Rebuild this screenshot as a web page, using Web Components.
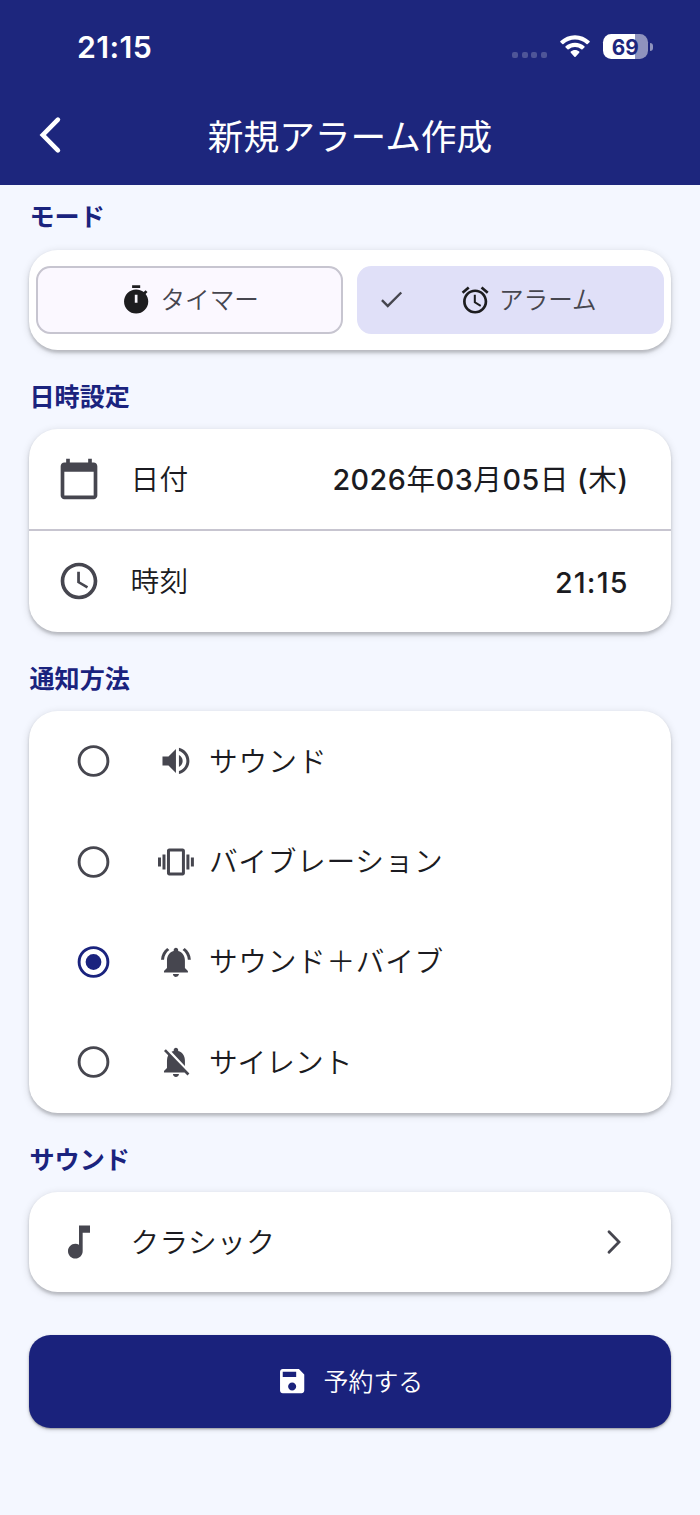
<!DOCTYPE html>
<html lang="ja">
<head>
<meta charset="utf-8">
<title>新規アラーム作成</title>
<style>
  body { margin: 0; background: #f4f7ff; font-family: Inter, "Noto Sans CJK JP", sans-serif; color: #1b1b21; }
</style>
</head>
<body>
<alarm-page></alarm-page>
<script>
const ICONS = {
  timer: 'M15 1H9v2h6V1zm-4 13h2V8h-2v6zm8.03-6.61l1.42-1.42c-.43-.51-.9-.99-1.41-1.41l-1.42 1.42C16.07 4.74 14.12 4 12 4c-4.97 0-9 4.03-9 9s4.02 9 9 9 9-4.03 9-9c0-2.12-.74-4.07-1.97-5.61z',
  alarm: 'M22 5.72l-4.6-3.86-1.29 1.53 4.6 3.86L22 5.72zM7.88 3.39L6.6 1.86 2 5.71l1.29 1.53 4.59-3.85zM12.5 8H11v6l4.75 2.85.75-1.23-4-2.37V8zM12 4c-4.97 0-9 4.03-9 9s4.02 9 9 9c4.97 0 9-4.03 9-9s-4.03-9-9-9zm0 16c-3.87 0-7-3.13-7-7s3.13-7 7-7 7 3.13 7 7-3.13 7-7 7z',
  check: 'M9 16.17L4.83 12l-1.42 1.41L9 19 21 7l-1.41-1.41z',
  calendar: 'M20 3h-1V1h-2v2H7V1H5v2H4c-1.1 0-2 .9-2 2v16c0 1.1.9 2 2 2h16c1.1 0 2-.9 2-2V5c0-1.1-.9-2-2-2zm0 18H4V8h16v13z',
  clock: 'M11.99 2C6.47 2 2 6.48 2 12s4.47 10 9.99 10C17.52 22 22 17.52 22 12S17.52 2 11.99 2zM12 20c-4.42 0-8-3.58-8-8s3.58-8 8-8 8 3.58 8 8-3.58 8-8 8zm.5-13H11v6l5.25 3.15.75-1.23-4.5-2.67z',
  volume: 'M3 9v6h4l5 5V4L7 9H3zm13.5 3c0-1.77-1.02-3.29-2.5-4.03v8.05c1.48-.73 2.5-2.25 2.5-4.02zM14 3.23v2.06c2.89.86 5 3.54 5 6.71s-2.11 5.85-5 6.71v2.06c4.01-.91 7-4.49 7-8.77s-2.99-7.86-7-8.77z',
  vibration: 'M0 15h2V9H0v6zm3 2h2V7H3v10zm19-8v6h2V9h-2zm-3 8h2V7h-2v10zM16.5 3h-9C6.67 3 6 3.67 6 4.5v15c0 .83.67 1.5 1.5 1.5h9c.83 0 1.5-.67 1.5-1.5v-15c0-.83-.67-1.5-1.5-1.5zM16 19H8V5h8v14z',
  bell: 'M7.58 4.08L6.15 2.65C3.75 4.48 2.17 7.3 2.03 10.5h2c.15-2.65 1.51-4.97 3.55-6.42zm12.39 6.42h2c-.15-3.2-1.73-6.02-4.12-7.85l-1.42 1.43c2.02 1.45 3.39 3.77 3.54 6.42zM18 11c0-3.07-1.64-5.64-4.5-6.32V4c0-.83-.67-1.5-1.5-1.5s-1.5.67-1.5 1.5v.68C7.63 5.36 6 7.92 6 11v5l-2 2v1h16v-1l-2-2v-5zm-6 11c.14 0 .27-.01.4-.04.65-.14 1.18-.58 1.44-1.18.1-.24.15-.5.15-.78h-4c.01 1.1.9 2 2.01 2z',
  belloff: 'M20 18.69L7.84 6.14 5.27 3.49 4 4.76l2.8 2.8v.01c-.52.99-.8 2.16-.8 3.42v5l-2 2v1h13.73l2 2L21 19.72l-1-1.03zM12 22c1.11 0 2-.89 2-2h-4c0 1.11.89 2 2 2zm6-7.32V11c0-3.08-1.64-5.64-4.5-6.32V4c0-.83-.67-1.5-1.5-1.5s-1.5.67-1.5 1.5v.68c-.15.03-.29.08-.42.12-.1.03-.2.07-.3.11h-.01c-.01 0-.01 0-.02.01-.23.09-.46.2-.68.31 0 0-.01 0-.01.01L18 14.68z',
  note: 'M12 3v10.55c-.59-.34-1.27-.55-2-.55-2.21 0-4 1.79-4 4s1.79 4 4 4 4-1.79 4-4V7h4V3h-6z',
  save: 'M17 3H5c-1.11 0-2 .9-2 2v14c0 1.1.89 2 2 2h14c1.1 0 2-.9 2-2V7l-4-4zm-5 16c-1.66 0-3-1.34-3-3s1.34-3 3-3 3 1.34 3 3-1.34 3-3 3zm3-10H5V5h10v4z'
};

function define(name, render) {
  customElements.define(name, class extends HTMLElement {
    constructor() { super(); this.attachShadow({ mode: 'open' }); }
    connectedCallback() { this.shadowRoot.innerHTML = render(this); }
  });
}

define('md-icon', el => {
  const s = el.getAttribute('size');
  return `<style>:host{display:block;flex:none;width:${s}px;height:${s}px}svg{display:block}</style>
  <svg width="${s}" height="${s}" viewBox="0 0 24 24" fill="currentColor" fill-rule="evenodd"><path d="${ICONS[el.getAttribute('name')]}"/></svg>`;
});

define('status-bar', () => `<style>
  :host{display:flex;align-items:center;height:93px;padding:0 47.5px 0 77px;box-sizing:border-box;color:#fff}
  .time{font-size:30.300px;font-weight:600;letter-spacing:.4px;line-height:36px;margin-right:auto;padding-top:1px}
  .dots{display:flex;gap:3.7px;margin:16px 13px 0 0}
  .dots i{width:6px;height:6px;border-radius:2px;background:#4e5598}
  .wifi{display:block;margin-right:13px}
  .battery{display:flex;align-items:center;justify-content:center;width:45.3px;height:25px;border-radius:8.2px;box-sizing:border-box;padding:1px 1px 0 0;
    background:linear-gradient(90deg,#fff 32px,#8f93be 32px);color:#1d267d;font-size:20.800px;font-weight:650;line-height:25px}
  .tip{width:2.6px;height:8px;margin-left:1.6px;border-radius:0 4px 4px 0;background:#8f93be}
  </style>
  <span class="time">21:15</span>
  <span class="dots"><i></i><i></i><i></i><i></i></span>
  <svg class="wifi" width="30" height="23" viewBox="0 0 30 23" fill="#fff">
    <path d="M15 .3C20.6.3 25.700 2.500 29.500 6.100Q30.100 6.700 29.500 7.300L27.700 9.100Q27.100 9.600 26.500 9.100A16.700 16.700 0 0 0 3.500 9.100Q2.900 9.600 2.300 9.100L.5 7.300Q-.1 6.700.5 6.100C4.300 2.500 9.400.3 15 .3z"/>
    <path d="M15 7.700C18.600 7.700 21.900 9.100 24.400 11.300Q25 11.900 24.400 12.500L22.500 14.300Q21.900 14.800 21.300 14.300A9.400 9.400 0 0 0 8.700 14.300Q8.100 14.800 7.500 14.300L5.600 12.500Q5 11.900 5.600 11.300C8.100 9.100 11.400 7.700 15 7.700z"/>
    <path d="M15 15.100C16.600 15.100 18.100 15.700 19.200 16.600Q19.800 17.200 19.200 17.800L15.600 21.800Q15 22.400 14.400 21.800L10.800 17.800Q10.200 17.200 10.800 16.600C11.900 15.700 13.400 15.100 15 15.100z"/>
  </svg>
  <span class="battery">69</span><span class="tip"></span>`);

define('app-bar', () => `<style>
  :host{display:grid;grid-template-columns:100px 1fr 100px;align-items:center;height:91.7px;color:#fff}
  svg{display:block;margin-left:38px;margin-bottom:7px}
  h1{margin:0 0 3.500px;font-size:35.7px;font-weight:400;line-height:50px;text-align:center;white-space:nowrap}
  </style>
  <svg width="26" height="40" viewBox="0 0 26 40" fill="none" stroke="#fff" stroke-width="4.600" stroke-linecap="round"><path d="M19.900 4.700L4.800 20L19.900 35.300"/></svg>
  <h1><slot></slot></h1>`);

define('section-label', () => `<style>
  :host{display:block;font-size:25.100px;font-weight:700;line-height:36px;color:#1a237e;padding-left:.5px}
  </style><slot></slot>`);

define('surface-card', () => `<style>
  :host{display:flex;flex-direction:column;background:#fff;border-radius:28.700px;box-sizing:border-box;
    box-shadow:0 2.500px 3px rgba(0,0,0,.17),0 2px 8px rgba(0,0,0,.14)}
  </style><slot></slot>`);

define('segment-button', el => {
  const on = el.hasAttribute('selected');
  return `<style>
  :host{display:flex;align-items:center;justify-content:center;flex:1;height:68px;box-sizing:border-box;border-radius:14.400px;
    font-size:24.600px;line-height:34px;color:#46464f;border:2px solid ${on ? '#e0e0f8' : '#c7c5d0'};background:${on ? '#e0e0f8' : '#fbf8ff'}}
  .icon{margin-right:8px;color:#1d1d1f}
  .check{margin-right:53.300px;margin-left:-47.600px}
  span{font-weight:350}
  </style>${on ? '<md-icon class="check" name="check" size="28.700"></md-icon>' : ''}
  <md-icon class="icon" name="${el.getAttribute('icon')}" size="32.300"></md-icon><span><slot></slot></span>`;
});

define('list-row', el => `<style>
  :host{display:flex;align-items:center;height:100.400px;padding:0 42.500px 0 28px;box-sizing:border-box;font-size:28.700px;line-height:40px}
  md-icon{color:#46464f;margin-right:29.400px}
  .label{font-weight:350;letter-spacing:.4px;margin-right:auto;padding-top:1.400px}
  ::slotted(span[slot=value]){font-weight:500;white-space:nowrap;padding-top:2.400px}
  </style><md-icon name="${el.getAttribute('icon')}" size="44"></md-icon>
  <span class="label"><slot></slot></span><slot name="value"></slot>`);

define('row-divider', () => `<style>:host{display:block;height:1.800px;background:#c7c5d0}</style>`);

define('chevron-end', () => `<style>:host{display:block;margin-right:4.500px}svg{display:block}</style>
  <svg width="20" height="28" viewBox="0 0 20 28" fill="none" stroke="#46464f" stroke-width="2.800" stroke-linecap="round"><path d="M5 3.800L15 14L5 24.200"/></svg>`);

define('radio-option', el => {
  const on = el.hasAttribute('checked');
  const c = on ? '#1a237e' : '#46464f';
  return `<style>
  :host{display:flex;align-items:center;height:100.400px;padding-left:48px;font-size:28.700px;line-height:40px;font-weight:350;letter-spacing:.7px}
  svg{display:block;flex:none;margin-right:48px}
  md-icon{color:#46464f;margin-right:15px}
  span{padding-top:1px}
  </style>
  <svg width="33" height="32" viewBox="0 0 33 32"><circle cx="16.500" cy="16" r="14.400" fill="none" stroke="${c}" stroke-width="2.900"/>${on ? `<circle cx="16.500" cy="16" r="7.900" fill="${c}"/>` : ''}</svg>
  <md-icon name="${el.getAttribute('icon')}" size="35.900"></md-icon><span><slot></slot></span>`;
});

define('submit-button', () => `<style>
  :host{display:flex;align-items:center;justify-content:center;height:92.500px;border-radius:21.500px;background:#1a227c;color:#fff;
    font-size:24.900px;line-height:34px;box-shadow:0 1px 2px rgba(0,0,0,.3),0 2px 4px rgba(0,0,0,.15)}
  md-icon{margin-right:15.500px;margin-left:-1px}
  span{font-weight:350}
  </style><md-icon name="save" size="32.300"></md-icon><span><slot></slot></span>`);

define('alarm-page', () => `<style>
  :host{display:block;width:700px;height:1515px;overflow:hidden;background:#f4f7ff}
  header{background:#1d267d;height:184.700px}
  main{display:flex;flex-direction:column;padding:0 29px}
  section-label{height:36px}
  .segments{flex-direction:row;gap:14.500px;padding:16px 7.300px;height:100.400px}
  .date{letter-spacing:.52px}
  .date i{font-style:normal;font-weight:400}
  .time{letter-spacing:1.1px}
  </style>
  <header><status-bar></status-bar><app-bar>新規アラーム作成</app-bar></header>
  <main>
    <section-label style="margin:14px 0 15px">モード</section-label>
    <surface-card class="segments">
      <segment-button icon="timer">タイマー</segment-button>
      <segment-button icon="alarm" selected>アラーム</segment-button>
    </surface-card>
    <section-label style="margin:29.200px 0 13.800px">日時設定</section-label>
    <surface-card>
      <list-row icon="calendar">日付<span slot="value" class="date">2026<i>年</i>03<i>月</i>05<i>日</i> (<i>木</i>)</span></list-row>
      <row-divider></row-divider>
      <list-row icon="clock">時刻<span slot="value" class="time">21:15</span></list-row>
    </surface-card>
    <section-label style="margin:29.300px 0 14px">通知方法</section-label>
    <surface-card>
      <radio-option icon="volume" style="letter-spacing:1px">サウンド</radio-option>
      <radio-option icon="vibration">バイブレーション</radio-option>
      <radio-option icon="bell" checked>サウンド＋バイブ</radio-option>
      <radio-option icon="belloff" style="letter-spacing:0">サイレント</radio-option>
    </surface-card>
    <section-label style="margin:29px 0 14.500px">サウンド</section-label>
    <surface-card>
      <list-row icon="note">クラシック<chevron-end slot="value"></chevron-end></list-row>
    </surface-card>
    <submit-button style="margin-top:43px">予約する</submit-button>
  </main>`);
</script>
</body>
</html>
